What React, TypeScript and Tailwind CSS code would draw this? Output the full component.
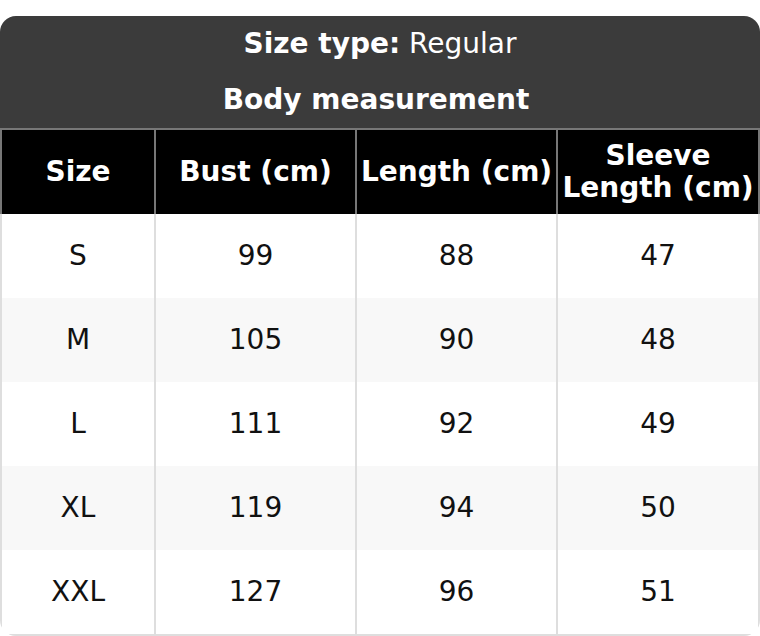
const rows = [
  { size: "S", bust: "99", length: "88", sleeve: "47" },
  { size: "M", bust: "105", length: "90", sleeve: "48" },
  { size: "L", bust: "111", length: "92", sleeve: "49" },
  { size: "XL", bust: "119", length: "94", sleeve: "50" },
  { size: "XXL", bust: "127", length: "96", sleeve: "51" },
];

const cols = "grid grid-cols-[156px_201px_201px_202px]";

export default function App() {
  return (
    <div className="bg-white pt-4 font-['DejaVu_Sans',sans-serif] text-[28px]">
      <div className="w-[760px] overflow-hidden rounded-2xl">
        {/* Title block */}
        <div className="flex h-[112px] flex-col bg-[#3b3b3b] text-white">
          <div className="flex h-14 items-center justify-center whitespace-pre">
            <span className="font-bold">Size type:</span> Regular
          </div>
          <div className="flex h-14 items-center justify-center pr-2 font-bold">
            Body measurement
          </div>
        </div>

        {/* Column headers */}
        <div className={`${cols} border-t-2 border-[#777] bg-black font-bold leading-8 text-white`}>
          <HeadCell first>Size</HeadCell>
          <HeadCell>Bust (cm)</HeadCell>
          <HeadCell>Length (cm)</HeadCell>
          <HeadCell>
            Sleeve
            <br />
            Length (cm)
          </HeadCell>
        </div>

        {/* Body */}
        {rows.map((r, i) => (
          <div
            key={r.size}
            className={`${cols} ${i % 2 === 1 ? "bg-[#f8f8f8]" : "bg-white"} text-[#111]`}
          >
            <Cell first last={i === rows.length - 1}>{r.size}</Cell>
            <Cell last={i === rows.length - 1}>{r.bust}</Cell>
            <Cell last={i === rows.length - 1}>{r.length}</Cell>
            <Cell last={i === rows.length - 1}>{r.sleeve}</Cell>
          </div>
        ))}
      </div>
    </div>
  );
}

function HeadCell({ first, children }: { first?: boolean; children: React.ReactNode }) {
  return (
    <div
      className={`flex h-[84px] items-center justify-center border-r-2 border-[#777] text-center ${
        first ? "border-l-2" : ""
      }`}
    >
      <div>{children}</div>
    </div>
  );
}

function Cell({
  first,
  last,
  children,
}: {
  first?: boolean;
  last?: boolean;
  children: React.ReactNode;
}) {
  return (
    <div
      className={`flex items-center justify-center border-r-2 border-[#dedede] ${
        first ? "border-l-2" : ""
      } ${last ? "h-[86px] border-b-2" : "h-[84px]"}`}
    >
      {children}
    </div>
  );
}
